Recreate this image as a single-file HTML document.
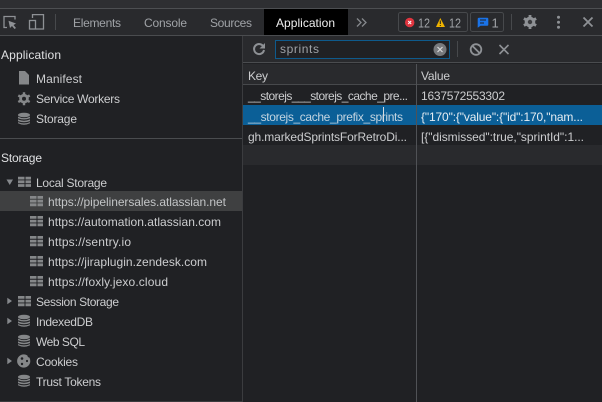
<!DOCTYPE html>
<html><head><meta charset="utf-8"><style>
html,body{margin:0;padding:0;background:#202124;width:602px;height:402px;overflow:hidden}
svg{display:block}
text{font-family:"Liberation Sans",sans-serif;font-size:12px;fill:#cccdcf}
.t{fill:#a0a3a7}
.h{fill:#dfe0e2}
</style></head><body>
<svg width="602" height="402" viewBox="0 0 602 402" xmlns="http://www.w3.org/2000/svg">
<defs>
<g id="db" fill="#858789">
<ellipse cx="24" cy="115" rx="6" ry="2.300"/>
<path d="M18 116.600Q24 119.600 30 116.600V118.300Q24 120.800 18 118.300Z"/>
<path d="M18 119.400Q24 122 30 119.400V121.100Q24 123.400 18 121.100Z"/>
<path d="M18 122.100Q24 124.600 30 122.100V123.200Q24 126.200 18 123.200Z"/>
</g>
<path id="grid" d="M0 0h6.500v2.800h-6.500zM7.500 0h5.500v2.800h-5.500zM0 3.700h6.500v2.800h-6.500zM7.500 3.700h5.500v2.800h-5.500zM0 7.400h6.500v2.800h-6.500zM7.500 7.400h5.500v2.800h-5.500z" fill="#858789"/>
</defs>
<rect width="602" height="402" fill="#202124"/>
<rect width="602" height="8" fill="#2e2f32"/>
<rect y="8" width="602" height="1" fill="#4d4f52"/>
<rect y="9" width="602" height="26" fill="#292a2d"/>
<rect y="35" width="602" height="1" fill="#4a4c4f"/>
<rect x="264" y="9" width="84" height="26" fill="#000"/>
<!-- toolbar icons -->
<g fill="none" stroke="#8e9195" stroke-width="1.300">
<path d="M7 27.500H4V16.500H15V19.500"/>
<rect x="29.500" y="20.500" width="6" height="8.500"/>
<path d="M32.500 18V14.600H43.500V29H36"/>
</g>
<path d="M8.500 20.700L16 23.500L13.500 25L16 28L14.500 29L12 26L10 28Z" fill="#8e9195"/>
<rect x="55" y="14" width="1" height="16" fill="#47494c"/>
<text class="t" x="73" y="27" textLength="48">Elements</text>
<text class="t" x="144" y="27" textLength="43">Console</text>
<text class="t" x="210" y="27" textLength="42">Sources</text>
<text class="h" x="276" y="27" textLength="59" style="fill:#f0f0f0">Application</text>
<path d="M357 18.500L361 22.500L357 26.500M362 18.500L366 22.500L362 26.500" fill="none" stroke="#85888c" stroke-width="1.300"/>
<!-- badges -->
<rect x="398.500" y="12.500" width="69" height="19" rx="2" fill="none" stroke="#47494c"/>
<rect x="470.500" y="12.500" width="33" height="19" rx="2" fill="none" stroke="#47494c"/>
<circle cx="409.700" cy="22.500" r="4.700" fill="#e0353f"/>
<path d="M408.200 21L411.200 24M411.200 21L408.200 24" stroke="#fff" stroke-width="1"/>
<text class="t" x="418" y="27.500" textLength="12" lengthAdjust="spacingAndGlyphs" style="font-size:13px">12</text>
<path d="M440.300 18L445 27H436Z" fill="#f0b400"/>
<rect x="439.800" y="20.500" width="1" height="3.500" fill="#222"/><rect x="439.800" y="25" width="1" height="1" fill="#222"/>
<text class="t" x="449" y="27.500" textLength="12" lengthAdjust="spacingAndGlyphs" style="font-size:13px">12</text>
<path d="M479 17.700H487.300Q488.300 17.700 488.300 18.700V24.700Q488.300 25.700 487.300 25.700H480.500L477.700 27.700V18.700Q477.700 17.700 479 17.700Z" fill="#1a73e8"/>
<path d="M480 20H486M480 23H484" stroke="#202124" stroke-width="1"/>
<text class="t" x="491.500" y="27.500" style="font-size:13px">1</text>
<rect x="511" y="14" width="1" height="16" fill="#47494c"/>
<!-- gear -->
<g transform="translate(530 22)">
<circle r="5.300" fill="#8e9195"/>
<g stroke="#8e9195" stroke-width="2.800"><path d="M0 -7V7M-6.100 -3.500L6.100 3.500M-6.100 3.500L6.100 -3.500"/></g>
<circle r="2.200" fill="#3a3b3e"/>
</g>
<circle cx="558.500" cy="17.300" r="1.500" fill="#8e9195"/><circle cx="558.500" cy="22.300" r="1.500" fill="#8e9195"/><circle cx="558.500" cy="27.300" r="1.500" fill="#8e9195"/>
<path d="M583.500 17.500L592.500 26.500M592.500 17.500L583.500 26.500" stroke="#8e9195" stroke-width="1.800"/>
<!-- right toolbar -->
<rect x="243" y="36" width="359" height="26" fill="#292a2d"/>
<rect x="242" y="36" width="1" height="366" fill="#3b3c3f"/>
<rect x="243" y="62" width="359" height="1" fill="#4a4c4f"/>
<rect x="243" y="63" width="359" height="1" fill="#202124"/>
<path d="M263.400 46.500A5 5 0 1 0 264 50" fill="none" stroke="#8e9195" stroke-width="2"/>
<path d="M265 43V48.500H259.500Z" fill="#8e9195"/>
<rect x="275.500" y="40.500" width="174" height="18" fill="#202124" stroke="#0e5a8c"/>
<text class="t" x="280" y="53" textLength="39">sprints</text>
<circle cx="440" cy="49.500" r="6.500" fill="#77797c"/>
<path d="M437.500 47L442.500 52M442.500 47L437.500 52" stroke="#d8d8d8" stroke-width="1.200"/>
<rect x="457" y="41" width="1" height="16" fill="#47494c"/>
<circle cx="476" cy="49.500" r="5.300" fill="none" stroke="#8e9195" stroke-width="1.800"/>
<path d="M472.500 46L479.500 53" stroke="#8e9195" stroke-width="1.800"/>
<path d="M499.500 45L508.500 54M508.500 45L499.500 54" stroke="#8e9195" stroke-width="1.600"/>
<!-- table -->
<rect x="243" y="64" width="359" height="21" fill="#292a2d"/>
<rect x="243" y="84" width="359" height="1" fill="#47494c"/>
<rect x="243" y="85" width="359" height="20" fill="#202124"/>
<rect x="243" y="105" width="359" height="20" fill="#0b5f97"/>
<rect x="243" y="125" width="359" height="20" fill="#202124"/>
<rect x="243" y="145" width="359" height="20" fill="#292a2d"/>
<rect x="416" y="64" width="1" height="338" fill="#505256"/>
<text x="248" y="80" textLength="20">Key</text>
<text x="421" y="80" textLength="29">Value</text>
<text x="248" y="100" textLength="160">__storejs___storejs_cache_pre...</text>
<text x="421" y="100" textLength="84">1637572553302</text>
<text x="248" y="121" textLength="155" style="fill:#c3d4e0">__storejs_cache_prefix_sprints</text>
<rect x="383" y="107" width="1" height="15" fill="#d8dce0"/>
<text x="421" y="121" textLength="162" style="fill:#e6edf2">{"170":{"value":{"id":170,"nam...</text>
<text x="248" y="141" textLength="159">gh.markedSprintsForRetroDi...</text>
<text x="421" y="141" textLength="163">[{"dismissed":true,"sprintId":1...</text>
<!-- sidebar -->
<text class="h" x="1" y="59" textLength="60">Application</text>
<path d="M19 71H25L29 75V84.500H19Z" fill="#858789"/>
<text x="36" y="83" textLength="46">Manifest</text>
<g transform="translate(24 98.700)">
<circle r="4.800" fill="#858789"/>
<g stroke="#858789" stroke-width="2.400"><path d="M0 -6.500V6.500M-5.700 -3.300L5.700 3.300M-5.700 3.300L5.700 -3.300"/></g>
<circle r="2" fill="#202124"/>
</g>
<text x="36" y="103" textLength="84">Service Workers</text>
<use href="#db"/>
<text x="36" y="123" textLength="41">Storage</text>
<rect y="138" width="242" height="1" fill="#4a4c4f"/>
<text class="h" x="1" y="162" textLength="41">Storage</text>
<path d="M6.500 179.500H13L9.750 185Z" fill="#85888c"/>
<use href="#grid" x="18" y="176.700"/>
<text x="36" y="187" textLength="71">Local Storage</text>
<rect y="191" width="242" height="20" fill="#3f4041"/>
<use href="#grid" x="30" y="196"/>
<use href="#grid" x="30" y="216"/>
<use href="#grid" x="30" y="236"/>
<use href="#grid" x="30" y="256"/>
<use href="#grid" x="30" y="276"/>
<use href="#grid" x="18" y="296"/>
<text x="48" y="206" textLength="178" style="fill:#c2c4c6">https://pipelinersales.atlassian.net</text>
<text x="48" y="226" textLength="173">https://automation.atlassian.com</text>
<text x="48" y="246" textLength="83">https://sentry.io</text>
<text x="48" y="266" textLength="159">https://jiraplugin.zendesk.com</text>
<text x="48" y="286" textLength="120">https://foxly.jexo.cloud</text>
<path d="M7.300 297.700L12 301L7.300 304.300ZM7.300 317.700L12 321L7.300 324.300ZM7.300 357.700L12 361L7.300 364.300Z" fill="#85888c"/>
<text x="36" y="306" textLength="83">Session Storage</text>
<use href="#db" y="202"/>
<text x="36" y="326" textLength="57">IndexedDB</text>
<use href="#db" y="222"/>
<text x="36" y="346" textLength="49">Web SQL</text>
<circle cx="23.700" cy="361" r="6.600" fill="#858789"/>
<circle cx="22" cy="358.500" r="1.300" fill="#202124"/><circle cx="27" cy="361" r="1.100" fill="#202124"/><circle cx="22" cy="364" r="1.200" fill="#202124"/><circle cx="29.500" cy="355.500" r="2" fill="#202124"/>
<text x="36" y="366" textLength="42">Cookies</text>
<use href="#db" y="262"/>
<text x="36" y="386" textLength="65">Trust Tokens</text>
<rect y="401" width="242" height="1" fill="#3a3b3e"/>
</svg>
</body></html>
